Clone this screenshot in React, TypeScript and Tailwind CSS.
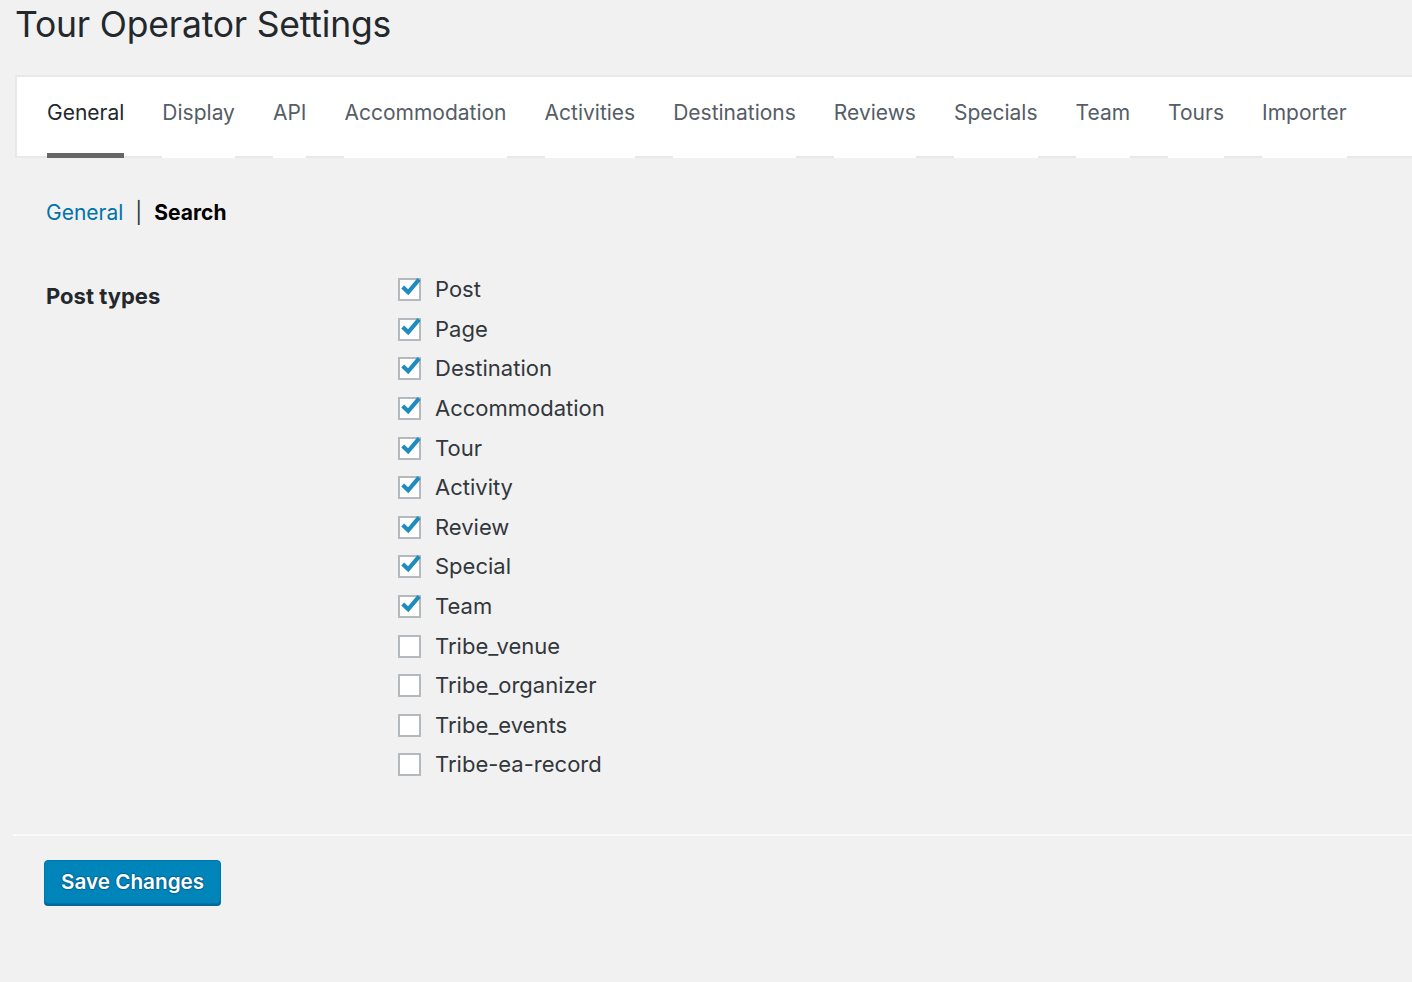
const tabs = [
  'General',
  'Display',
  'API',
  'Accommodation',
  'Activities',
  'Destinations',
  'Reviews',
  'Specials',
  'Team',
  'Tours',
  'Importer',
];

const postTypes: { label: string; checked: boolean }[] = [
  { label: 'Post', checked: true },
  { label: 'Page', checked: true },
  { label: 'Destination', checked: true },
  { label: 'Accommodation', checked: true },
  { label: 'Tour', checked: true },
  { label: 'Activity', checked: true },
  { label: 'Review', checked: true },
  { label: 'Special', checked: true },
  { label: 'Team', checked: true },
  { label: 'Tribe_venue', checked: false },
  { label: 'Tribe_organizer', checked: false },
  { label: 'Tribe_events', checked: false },
  { label: 'Tribe-ea-record', checked: false },
];

function Checkbox({ checked }: { checked: boolean }) {
  return (
    <span className="relative w-[23px] h-[23px] shrink-0 border-2 border-[#b4b9be] bg-white">
      {checked && (
        <svg viewBox="0 0 20 20" className="absolute -left-[1px] -top-[4px] w-[23px] h-[23px]">
          <path d="M3.2 9.5 L8 14.2 L17.5 3" fill="none" stroke="#1e8cbe" strokeWidth="3.6" strokeLinejoin="miter" />
        </svg>
      )}
    </span>
  );
}

export default function App() {
  return (
    <div className="min-h-[982px] bg-[#f1f1f1] text-[#23282d] font-['Inter','Liberation_Sans',sans-serif]">
      <h1 className="pl-[15px] pt-[1px] text-[35.5px] leading-[48px] font-normal text-[#23282d] tracking-[-0.2px]">
        Tour Operator Settings
      </h1>

      <div className="ml-[15px] mt-[26px] h-[83px] bg-white border-2 border-[#e8e8e8] border-r-0 flex items-end pl-[30px]">
        <nav className="flex gap-[38px] -mb-[2px]">
          {tabs.map((tab) => (
            <span
              key={tab}
              className={
                tab === 'General'
                  ? 'h-[79px] flex items-center pb-[7px] border-b-[5px] border-[#666] text-[21px] text-[#23282d]'
                  : 'h-[79px] flex items-center pb-[7px] border-b-[5px] border-white text-[21px] text-[#555d66]'
              }
            >
              {tab}
            </span>
          ))}
        </nav>
      </div>

      <div className="pl-[46px] pt-[40px] flex items-center text-[21px] leading-[30px]">
        <span className="text-[#0073aa]">General</span>
        <span className="mx-[12px] text-[#32373c]">|</span>
        <span className="font-bold text-black">Search</span>
      </div>

      <div className="pl-[46px] pt-[42px] flex">
        <div className="w-[352px] text-[22px] font-bold leading-[30px] pt-[11px]">Post types</div>
        <ul className="flex flex-col">
          {postTypes.map((p) => (
            <li key={p.label} className="h-[39.6px] flex items-center gap-[14px] text-[22px] text-[#32373c]">
              <Checkbox checked={p.checked} />
              <span>{p.label}</span>
            </li>
          ))}
        </ul>
      </div>

      <div className="ml-[13px] mt-[49px] h-[2px] bg-[#fafafa]" />

      <div className="pl-[44px] pt-[24px]">
        <button
          type="button"
          className="h-[44px] px-[16px] rounded-[4px] bg-[#0085ba] border border-[#0073aa] shadow-[0_2px_0_#006799] text-white text-[20.7px] font-semibold [text-shadow:0_-1px_1px_#006799,1px_0_1px_#006799,0_1px_1px_#006799,-1px_0_1px_#006799]"
        >
          Save Changes
        </button>
      </div>
    </div>
  );
}
